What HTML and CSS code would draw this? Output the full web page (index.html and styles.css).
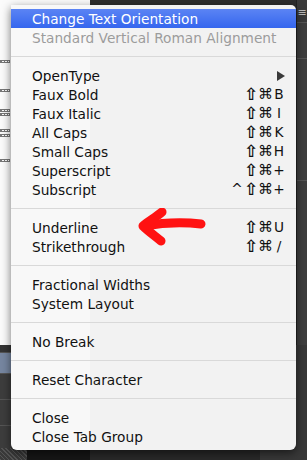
FILE: index.html
```html
<html lang="en">
  <head>
    <meta charset="UTF-8" />
    <title>Character menu</title>
    <link rel="stylesheet" href="styles.css">
  </head>

  <body>
    <section class="screen">
      <div class="backdrop">
        <div class="backdrop__doc">
          <span class="glyph glyph--a"></span>
          <span class="glyph glyph--b"></span>
          <span class="glyph glyph--c"></span>
          <span class="glyph glyph--d"></span>
          <span class="glyph glyph--e"></span>
          <span class="glyph glyph--f"></span>
          <span class="glyph glyph--g"></span>
        </div>
        <div class="backdrop__panel"></div>
        <div class="backdrop__strip">
          <span class="strip-icon">&#8801;</span>
        </div>
        <div class="backdrop__layers">
          <div class="layers__head"></div>
          <div class="layers__row layers__row--active"></div>
          <div class="layers__row"></div>
          <div class="layers__row"></div>
          <div class="layers__grip"></div>
        </div>
        <div class="backdrop__black"></div>
        <div class="backdrop__dark"></div>
        <div class="backdrop__side"></div>
      </div>

      <div class="menu">
        <div class="menu__item menu__item--active">Change Text Orientation</div>
        <div class="menu__item menu__item--disabled">Standard Vertical Roman Alignment</div>
        <div class="menu__sep"></div>
        <div class="menu__item">OpenType
          <svg class="submenu" width="8" height="10" viewBox="0 0 8 10"><path d="M0 0 L8 5 L0 10 Z" fill="#3a3a3a"/></svg>
        </div>
        <div class="menu__item">Faux Bold<span class="keys"><span class="shift">&#8679;</span><span class="cmd">&#8984;</span><span>B</span></span></div>
        <div class="menu__item">Faux Italic<span class="keys"><span class="shift">&#8679;</span><span class="cmd">&#8984;</span><span>I</span></span></div>
        <div class="menu__item">All Caps<span class="keys"><span class="shift">&#8679;</span><span class="cmd">&#8984;</span><span>K</span></span></div>
        <div class="menu__item">Small Caps<span class="keys"><span class="shift">&#8679;</span><span class="cmd">&#8984;</span><span>H</span></span></div>
        <div class="menu__item">Superscript<span class="keys"><span class="shift">&#8679;</span><span class="cmd">&#8984;</span><span>+</span></span></div>
        <div class="menu__item">Subscript<span class="keys"><span>^</span><span class="shift">&#8679;</span><span class="cmd">&#8984;</span><span>+</span></span></div>
        <div class="menu__sep"></div>
        <div class="menu__item">Underline<span class="keys"><span class="shift">&#8679;</span><span class="cmd">&#8984;</span><span>U</span></span></div>
        <div class="menu__item">Strikethrough<span class="keys"><span class="shift">&#8679;</span><span class="cmd">&#8984;</span><span>/</span></span></div>
        <div class="menu__sep"></div>
        <div class="menu__item">Fractional Widths</div>
        <div class="menu__item">System Layout</div>
        <div class="menu__sep"></div>
        <div class="menu__item">No Break</div>
        <div class="menu__sep"></div>
        <div class="menu__item">Reset Character</div>
        <div class="menu__sep"></div>
        <div class="menu__item">Close</div>
        <div class="menu__item">Close Tab Group</div>
      </div>

      <svg class="scribble" width="84" height="44" viewBox="0 0 84 44">
        <path d="M66 16 C50 14 31 14 9 18" stroke="#ff1212" stroke-width="9" stroke-linecap="round" fill="none"/>
        <path d="M27 4 C21 9 14 13 8 18 C13 23 20 28 26 33" stroke="#ff1212" stroke-width="9" stroke-linecap="round" stroke-linejoin="round" fill="none"/>
      </svg>
    </section>
  </body>
</html>
```

FILE: styles.css
```css
* {
  box-sizing: border-box;
}
body {
  margin: 0;
  background: #2b2b2b;
  overflow: hidden;
}
.screen {
  position: relative;
  width: 307px;
  height: 460px;
  font-family: "DejaVu Sans", "Liberation Sans", sans-serif;
}

/* stuff behind the menu */
.backdrop {
  display: grid;
  grid-template-columns: 27px 63px 170px 36px 11px;
  grid-template-rows: 345px 115px;
  height: 100%;
}
.backdrop__doc {
  grid-column: 1 / 3;
  background: #fbfbfb;
  display: flex;
  flex-direction: column;
  align-items: flex-start;
}
.glyph {
  width: 10px;
  height: 3px;
  border: 1px solid #777;
  background: repeating-linear-gradient(to right, #777 0 1px, transparent 1px 3px);
}
.glyph--a { margin-top: 60px; }
.glyph--b { margin-top: 26px; }
.glyph--c { margin-top: 17px; }
.glyph--d { margin-top: 1px; }
.glyph--e { margin-top: 13px; }
.glyph--f { margin-top: 2px; }
.glyph--g { margin-top: 22px; }
.backdrop__panel {
  grid-column: 3 / 5;
  background: #2d2d2d;
}
.backdrop__strip {
  background: linear-gradient(#3a3a3a 0 22px, #555 22px 23px, #3e3e3e 23px 58px, #555 58px 59px, #3e3e3e 59px 180px, #555 180px 181px, #3e3e3e 181px);
  border-left: 1px solid #222;
  display: flex;
  justify-content: center;
}
.strip-icon {
  color: #bbb;
  font-size: 11px;
  line-height: 1;
  margin-top: 7px;
}
.backdrop__layers {
  background: #3d3d3d;
  display: flex;
  flex-direction: column;
}
.layers__head {
  height: 8px;
  background: #343434;
  border-bottom: 1px solid #555;
}
.layers__row {
  height: 26px;
  border-bottom: 1px solid #555;
}
.layers__row--active {
  height: 21px;
  background: #7686a0;
}
.layers__grip {
  margin-top: auto;
  height: 12px;
  background: repeating-linear-gradient(45deg, #555 0 1px, #3a3a3a 1px 3px);
}
.backdrop__black {
  background: #161616;
}
.backdrop__dark {
  background: #292929;
}
.backdrop__side {
  grid-column: 4 / 6;
  background: #383838;
}

/* the pulled-down menu */
.menu {
  position: absolute;
  left: 11px;
  top: 5px;
  width: 285px;
  padding: 4px 0;
  background: linear-gradient(to right, #f8f8f8 0 79px, #f2f2f2 79px);
  border-radius: 0 5px 6px 6px;
  box-shadow: 0 3px 10px rgba(0, 0, 0, 0.55);
  font-size: 13.7px;
  color: #111;
}
.menu__item {
  height: 19px;
  display: flex;
  align-items: center;
  justify-content: space-between;
  padding: 0 10px 0 21px;
  white-space: nowrap;
}
.menu__item--active {
  background: linear-gradient(#5b84f4, #3566ee);
  color: #fff;
}
.menu__item--disabled {
  color: #9c9c9c;
}
.menu__sep {
  height: 19px;
  display: flex;
  align-items: center;
}
.menu__sep::after {
  content: "";
  flex: 1;
  height: 1px;
  background: #d9d9d9;
}
.keys {
  display: flex;
  align-items: center;
  height: 19px;
}
.keys span {
  width: 14px;
  text-align: center;
  line-height: 19px;
}
.keys .shift {
  font-size: 17px;
  font-weight: bold;
}
.keys .cmd {
  font-size: 15px;
}
.submenu {
  margin-right: 1px;
}
.scribble {
  position: absolute;
  left: 135px;
  top: 208px;
}
```
